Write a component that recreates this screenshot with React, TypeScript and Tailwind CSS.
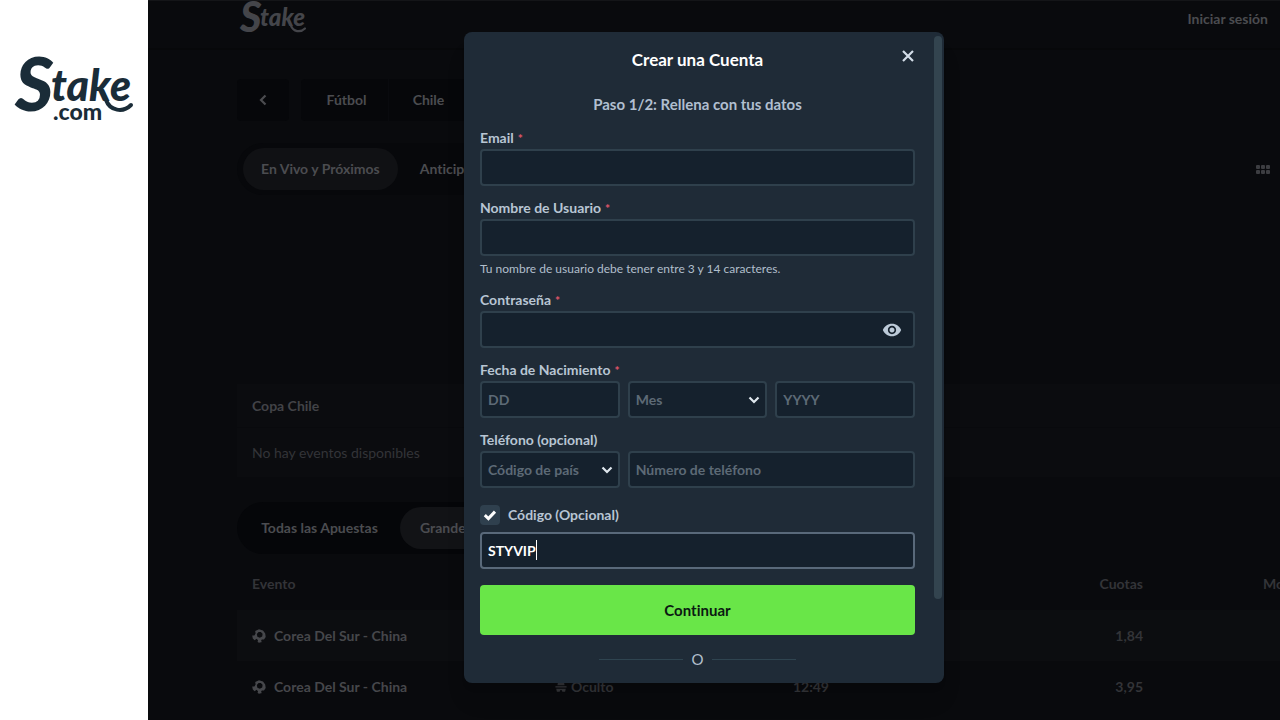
import { useState } from 'react'
import type { InputHTMLAttributes, ReactNode } from 'react'
import { MdVisibility } from 'react-icons/md'
import clsx from 'clsx'

const fieldClass =
  'block h-[37px] w-full rounded border-2 border-[#2f404c] bg-[#15212d] px-1.5 text-sm font-bold text-white outline-none placeholder:text-[#5d6a76] placeholder:opacity-100'

const bets = [
  { id: 1, event: 'Corea Del Sur - China', user: 'Oculto', time: '12:49', odds: '1,84' },
  { id: 2, event: 'Corea Del Sur - China', user: 'Oculto', time: '12:49', odds: '3,95' },
]

const StakeLogo = ({ className, withDomain }: { className: string; withDomain?: boolean }) => (
  <svg viewBox="0 0 116 66" className={clsx('overflow-visible', className)} fill="currentColor" role="img" aria-label="Stake">
    <g fontFamily="Lato, sans-serif" fontStyle="italic" fontWeight="900">
      <text x="-1" y="55" fontSize="74">S</text>
      <text x="35" y="45" fontSize="43">take</text>
      {withDomain && (
        <text x="37" y="64" fontSize="23" fontStyle="normal" fontWeight="900">.com</text>
      )}
    </g>
    <path d="M90 44 C94 55 107 57 115 49" fill="none" stroke="currentColor" strokeWidth="4" strokeLinecap="round" />
  </svg>
)

const Chevron = ({ className }: { className?: string }) => (
  <svg viewBox="0 0 12 12" className={clsx('h-3 w-3', className)} fill="none" stroke="currentColor" strokeWidth="2.2">
    <path d="M1.5 3.5 L6 8 L10.5 3.5" />
  </svg>
)

const FootballIcon = () => (
  <svg viewBox="0 0 14 14" className="h-3.5 w-3.5 shrink-0" fill="currentColor">
    <path fillRule="evenodd" d="M3.2 2 L7 0.3 L11 1.4 L13.2 4.4 L13.7 8 L12 10.6 L9.8 10.4 L9 12 L10 13 L7 13.8 L5.6 13 L6 11.2 L4.6 9.8 L2.6 11.2 L0.8 9.6 L0.2 6.6 L2.4 6.6 L3.6 4.6 Z M6.6 3 L4.8 5 L5.4 7.8 L7.8 8.8 L10.2 7.4 L10.6 4.8 L8.8 3 Z" />
  </svg>
)

const HiddenUserIcon = () => (
  <svg viewBox="0 0 14 14" className="h-3 w-3 shrink-0" fill="currentColor">
    <path d="M3.6 1 C4.6 0.4 5.4 1.4 7 1.4 C8.6 1.4 9.4 0.4 10.4 1 L11.2 5 L2.8 5 Z" />
    <path d="M0.5 6 H13.5 V7.6 H0.5 Z" />
    <path d="M1.4 9 H12.6 L11.8 12.4 H8.6 L7.6 10.6 H6.4 L5.4 12.4 H2.2 Z" />
  </svg>
)

const Label = ({ htmlFor, required, children }: { htmlFor: string; required?: boolean; children: ReactNode }) => (
  <label htmlFor={htmlFor} className="mb-px block text-sm leading-5 font-bold text-[#b8c5d3]">
    {children}
    {required && <span className="ml-1 text-xs text-[#e0566b]">*</span>}
  </label>
)

const TextField = (props: InputHTMLAttributes<HTMLInputElement>) => <input {...props} className={fieldClass} />

const SelectField = ({ id, label, placeholder, options }: { id: string; label: string; placeholder: string; options: string[] }) => (
  <div className="relative">
    <select
      id={id}
      aria-label={label}
      defaultValue=""
      className="block h-[37px] w-full appearance-none rounded border-2 border-[#2f404c] bg-[#15212d] px-1.5 text-sm font-bold text-[#5d6a76] outline-none"
    >
      <option value="">{placeholder}</option>
      {options.map((option) => (
        <option key={option}>{option}</option>
      ))}
    </select>
    <Chevron className="pointer-events-none absolute top-[13px] right-[7px] text-[#dfe7ee]" />
  </div>
)

const Background = () => (
  <div className="text-sm font-bold text-[#4b4c50]">
    <header className="flex h-[50px] items-start justify-between border-t border-[#141518] border-b-2 border-b-[#07080a] pr-3 pl-[92px]">
      <StakeLogo className="h-[37px] w-[66px] text-[#44454a]" />
      <a href="#login" className="mt-2 leading-5">Iniciar sesión</a>
    </header>

    <div className="pt-[29px] pl-[89px]">
      <nav className="flex h-[42px] gap-3">
        <button type="button" aria-label="Volver" className="flex w-[52px] items-center justify-center rounded-sm bg-[#06070a]">
          <Chevron className="rotate-90" />
        </button>
        <div className="flex">
          <a href="#futbol" className="flex w-[87px] items-center justify-center rounded-l-sm bg-[#06070a] pl-1">Fútbol</a>
          <a href="#chile" className="flex w-[80px] items-center justify-center border-l border-[#090a0e] bg-[#06070a]">Chile</a>
        </div>
      </nav>

      <div className="mt-[22px] flex h-[52px] items-center justify-between pr-2.5">
        <div className="flex h-full w-[320px] items-center rounded-full bg-[#07080b] p-1.5">
          <button type="button" className="h-[42px] rounded-full bg-[#101114] px-[18px] whitespace-nowrap">En Vivo y Próximos</button>
          <button type="button" className="h-[42px] px-[22px]">Anticipados</button>
        </div>
        <div className="grid grid-cols-3 gap-px" aria-hidden="true">
          {Array.from({ length: 6 }, (_, i) => (
            <span key={i} className="h-1 w-1 rounded-[1px] bg-[#3c3d41]" />
          ))}
        </div>
      </div>

      <section className="mt-[189px] bg-[#0b0c0f]">
        <h2 className="flex h-11 items-center border-b border-[#090a0d] pl-[15px] text-[#424347]">Copa Chile</h2>
        <p className="flex h-[49px] items-center pl-[15px] font-normal text-[#333438]">No hay eventos disponibles</p>
      </section>

      <div className="mt-[25px] flex h-[52px] w-[360px] items-center rounded-full bg-[#050609] p-1.5">
        <button type="button" className="h-[42px] w-[157px] pr-1 whitespace-nowrap">Todas las Apuestas</button>
        <button type="button" className="h-[42px] rounded-full bg-[#121316] px-5">Grandes Apuestas</button>
      </div>

      <table className="mt-1 w-[calc(100%+38px)] table-fixed text-[#333438]">
        <thead>
          <tr className="h-[52px] text-left">
            <th className="w-[303px] pl-[15px] font-bold">Evento</th>
            <th className="w-[152px] pl-[15px] font-bold">Usuario</th>
            <th className="w-[152px] pr-[15px] text-right font-bold">Hora</th>
            <th className="pr-[15px] text-right font-bold">Cuotas</th>
            <th className="w-[160px] pl-[105px] font-bold">Monto</th>
          </tr>
        </thead>
        <tbody>
          {bets.map((bet) => (
            <tr key={bet.id} className="h-[51px] odd:bg-[#0c0d10]">
              <td className="pl-[15px] text-[#46474b]">
                <span className="flex items-center gap-2">
                  <FootballIcon />
                  {bet.event}
                </span>
              </td>
              <td className="pl-[15px]">
                <span className="flex items-center gap-1">
                  <HiddenUserIcon />
                  {bet.user}
                </span>
              </td>
              <td className="pr-[15px] text-right">{bet.time}</td>
              <td className="pr-[15px] text-right">{bet.odds}</td>
              <td />
            </tr>
          ))}
        </tbody>
      </table>
    </div>
  </div>
)

const RegisterModal = () => {
  const [hasCode, setHasCode] = useState<boolean>(true)
  const [showPassword, setShowPassword] = useState<boolean>(false)

  return (
    <div role="dialog" aria-labelledby="register-title" className="relative w-[480px] rounded-lg bg-[#1f2b37] pt-4 pr-[29px] pb-3 pl-4 shadow-xl">
      <h1 id="register-title" className="text-center text-[17px] leading-6 font-bold text-white">Crear una Cuenta</h1>
      <button type="button" aria-label="Cerrar" className="absolute top-[17px] right-[29px] p-px text-[#d3dde8]">
        <svg viewBox="0 0 12 12" className="h-3 w-3" fill="none" stroke="currentColor" strokeWidth="2.2">
          <path d="M1 1 L11 11 M11 1 L1 11" />
        </svg>
      </button>
      {/* Scrollbar thumb */}
      <div className="absolute top-1 right-0.5 h-[563px] w-2 rounded-full bg-[#33444f]" />

      <p className="mt-5 text-center text-[15px] leading-6 font-bold text-[#b1bfd0]">Paso 1/2: Rellena con tus datos</p>

      <form className="mt-3" onSubmit={(e) => e.preventDefault()}>
        <div className="flex flex-col gap-3">
          <div>
            <Label htmlFor="email" required>Email</Label>
            <TextField id="email" type="email" />
          </div>
          <div>
            <Label htmlFor="username" required>Nombre de Usuario</Label>
            <TextField id="username" />
            <p className="mt-1 text-[12px] leading-[18px] text-[#b1bfcc]">Tu nombre de usuario debe tener entre 3 y 14 caracteres.</p>
          </div>
          <div>
            <Label htmlFor="password" required>Contraseña</Label>
            <div className="relative">
              <TextField id="password" type={showPassword ? 'text' : 'password'} />
              <button
                type="button"
                aria-label="Mostrar contraseña"
                onClick={() => setShowPassword(!showPassword)}
                className="absolute top-[9px] right-[13px] text-[#bccad8]"
              >
                <MdVisibility className="h-5 w-5" />
              </button>
            </div>
          </div>
          <div>
            <Label htmlFor="day" required>Fecha de Nacimiento</Label>
            <div className="grid grid-cols-3 gap-2">
              <TextField id="day" placeholder="DD" />
              <SelectField id="month" label="Mes" placeholder="Mes" options={['Enero', 'Febrero', 'Marzo']} />
              <TextField id="year" aria-label="Año" placeholder="YYYY" />
            </div>
          </div>
          <div>
            <Label htmlFor="phone">Teléfono (opcional)</Label>
            <div className="grid grid-cols-3 gap-2">
              <SelectField id="country" label="Código de país" placeholder="Código de país" options={['+34', '+56']} />
              <div className="col-span-2">
                <TextField id="phone" type="tel" placeholder="Número de teléfono" />
              </div>
            </div>
          </div>
        </div>

        <label className="mt-[17px] flex items-center gap-2 text-sm leading-5 font-bold text-[#b8c5d3]">
          <span className="relative h-5 w-5">
            <input
              type="checkbox"
              checked={hasCode}
              onChange={(e) => setHasCode(e.target.checked)}
              className="block h-5 w-5 appearance-none rounded-sm bg-[#2f404e]"
            />
            {hasCode && (
              <svg viewBox="0 0 20 20" className="pointer-events-none absolute inset-0" fill="none" stroke="#fff" strokeWidth="3">
                <path d="M4.8 10.2 L8.4 13.6 L15 6.6" />
              </svg>
            )}
          </span>
          Código (Opcional)
        </label>
        {hasCode && (
          <div className="relative mt-[7px]">
            <input
              aria-label="Código"
              defaultValue="STYVIP"
              className="block h-[37px] w-full rounded border-2 border-[#59697a] bg-[#15212d] px-1.5 text-sm font-bold text-white caret-transparent outline-none"
            />
            <span className="pointer-events-none absolute top-2 left-14 h-5 w-px bg-white" />
          </div>
        )}

        <button type="submit" className="mt-4 h-[50px] w-full rounded bg-[#69e648] text-[15px] font-bold text-[#0b1a12]">Continuar</button>
      </form>

      <div className="mt-3 flex items-center justify-center gap-2 text-[15px] leading-6 text-[#b1bfcc]">
        <span className="h-px w-[84px] bg-[#2f4450]" />
        O
        <span className="h-px w-[84px] bg-[#2f4450]" />
      </div>
    </div>
  )
}

const App = () => (
  <div className="flex min-h-screen bg-white font-['Lato',sans-serif] [font-variant-ligatures:none]">
    <aside className="w-[148px] shrink-0 px-4 pt-[56px]">
      <StakeLogo className="h-[66px] w-[116px] text-[#1a2c38]" withDomain />
    </aside>
    <main className="relative min-w-0 flex-1 overflow-hidden bg-[#090a0d]">
      <Background />
      <div className="absolute inset-0 flex items-start justify-center pt-8 pr-5">
        <RegisterModal />
      </div>
    </main>
  </div>
)

export default App
